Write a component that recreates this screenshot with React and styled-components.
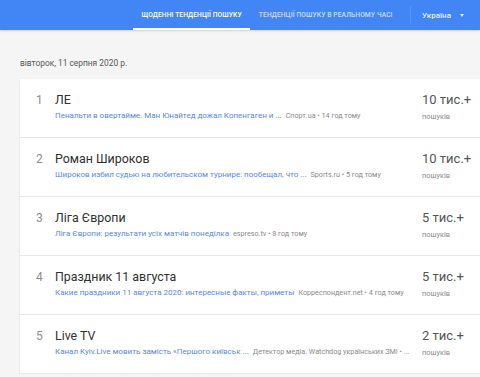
import React from "react";
import styled, { createGlobalStyle } from "styled-components";

const GlobalStyle = createGlobalStyle`
  html, body {
    margin: 0;
    padding: 0;
    background: #f5f5f5;
    font-family: Roboto, "Noto Sans", Arial, sans-serif;
    overflow: hidden;
  }
`;

const trends = [
  {
    title: "ЛЕ",
    link: "Пенальти в овертайме. Ман Юнайтед дожал Копенгаген и ...",
    source: "Спорт.ua • 14 год тому",
    count: "10 тис.+",
  },
  {
    title: "Роман Широков",
    link: "Широков избил судью на любительском турнире: пообещал, что ...",
    source: "Sports.ru • 5 год тому",
    count: "10 тис.+",
  },
  {
    title: "Ліга Європи",
    link: "Ліга Європи: результати усіх матчів понеділка",
    source: "espreso.tv • 8 год тому",
    count: "5 тис.+",
  },
  {
    title: "Праздник 11 августа",
    link: "Какие праздники 11 августа 2020: интересные факты, приметы",
    source: "Корреспондент.net • 4 год тому",
    count: "5 тис.+",
  },
  {
    title: "Live TV",
    link: "Канал Kyiv.Live мовить замість «Першого київськ ...",
    source: "Детектор медіа. Watchdog українських ЗМІ • ...",
    count: "2 тис.+",
  },
];

const Header = styled.header`
  height: 30px;
  background: #4285f4;
  display: flex;
  align-items: stretch;
  padding-left: 133px;
  box-shadow: 0 1px 2px rgba(0, 0, 0, 0.15);
`;

const Tab = styled.div`
  display: flex;
  align-items: center;
  padding: 2px 8.5px 0;
  box-sizing: border-box;
  font-size: 6.7px;
  font-weight: 500;
  letter-spacing: 0.1px;
  text-transform: uppercase;
  white-space: nowrap;
  color: ${(p) => (p.$active ? "#ffffff" : "rgba(255,255,255,0.72)")};
  border-bottom: 2px solid ${(p) => (p.$active ? "#ffffff" : "transparent")};
`;

const Divider = styled.div`
  width: 1px;
  background: rgba(255, 255, 255, 0.12);
  margin: 6px 0 6px 9px;
`;

const Region = styled.div`
  display: flex;
  align-items: center;
  gap: 9px;
  padding-left: 11px;
  font-size: 8px;
  font-weight: 500;
  color: rgba(255, 255, 255, 0.9);
`;

const Caret = styled.span`
  width: 0;
  height: 0;
  border-left: 2.5px solid transparent;
  border-right: 2.5px solid transparent;
  border-top: 3px solid rgba(255, 255, 255, 0.85);
`;

const Main = styled.main`
  padding: 27px 0 0 20px;
`;

const DateLine = styled.div`
  font-size: 8.4px;
  line-height: 12px;
  color: #555;
  margin-bottom: 10px;
`;

const Card = styled.div`
  background: #fff;
  box-shadow: 0 1px 2px rgba(0, 0, 0, 0.12);
`;

const Row = styled.div`
  display: flex;
  height: 59px;
  box-sizing: border-box;
  padding: 13px 0 0 16px;
  border-bottom: 1px solid #e8e8e8;
`;

const Index = styled.div`
  width: 19px;
  font-size: 12px;
  line-height: 16px;
  color: #8c8c8c;
`;

const Details = styled.div`
  flex: 1;
  min-width: 0;
`;

const Title = styled.div`
  font-size: 12.4px;
  line-height: 16px;
  color: #303030;
`;

const Meta = styled.div`
  margin-top: 3px;
  display: flex;
  align-items: baseline;
  gap: 4px;
  white-space: nowrap;
`;

const Link = styled.span`
  font-size: 8px;
  color: #5a88d6;
`;

const Source = styled.span`
  font-size: 7.2px;
  color: #8a8a8a;
`;

const Count = styled.div`
  width: 58px;
  margin-top: -1px;
`;

const Volume = styled.div`
  font-size: 13px;
  line-height: 18px;
  color: #555;
`;

const VolumeLabel = styled.div`
  margin-top: 3px;
  font-size: 7.4px;
  color: #8a8a8a;
`;

export default function App() {
  return (
    <>
      <GlobalStyle />
      <Header>
        <Tab $active>Щоденні тенденції пошуку</Tab>
        <Tab>Тенденції пошуку в реальному часі</Tab>
        <Divider />
        <Region>
          Україна
          <Caret />
        </Region>
      </Header>
      <Main>
        <DateLine>вівторок, 11 серпня 2020 р.</DateLine>
        <Card>
          {trends.map((t, i) => (
            <Row key={t.title}>
              <Index>{i + 1}</Index>
              <Details>
                <Title>{t.title}</Title>
                <Meta>
                  <Link>{t.link}</Link>
                  <Source>{t.source}</Source>
                </Meta>
              </Details>
              <Count>
                <Volume>{t.count}</Volume>
                <VolumeLabel>пошуків</VolumeLabel>
              </Count>
            </Row>
          ))}
        </Card>
      </Main>
    </>
  );
}
